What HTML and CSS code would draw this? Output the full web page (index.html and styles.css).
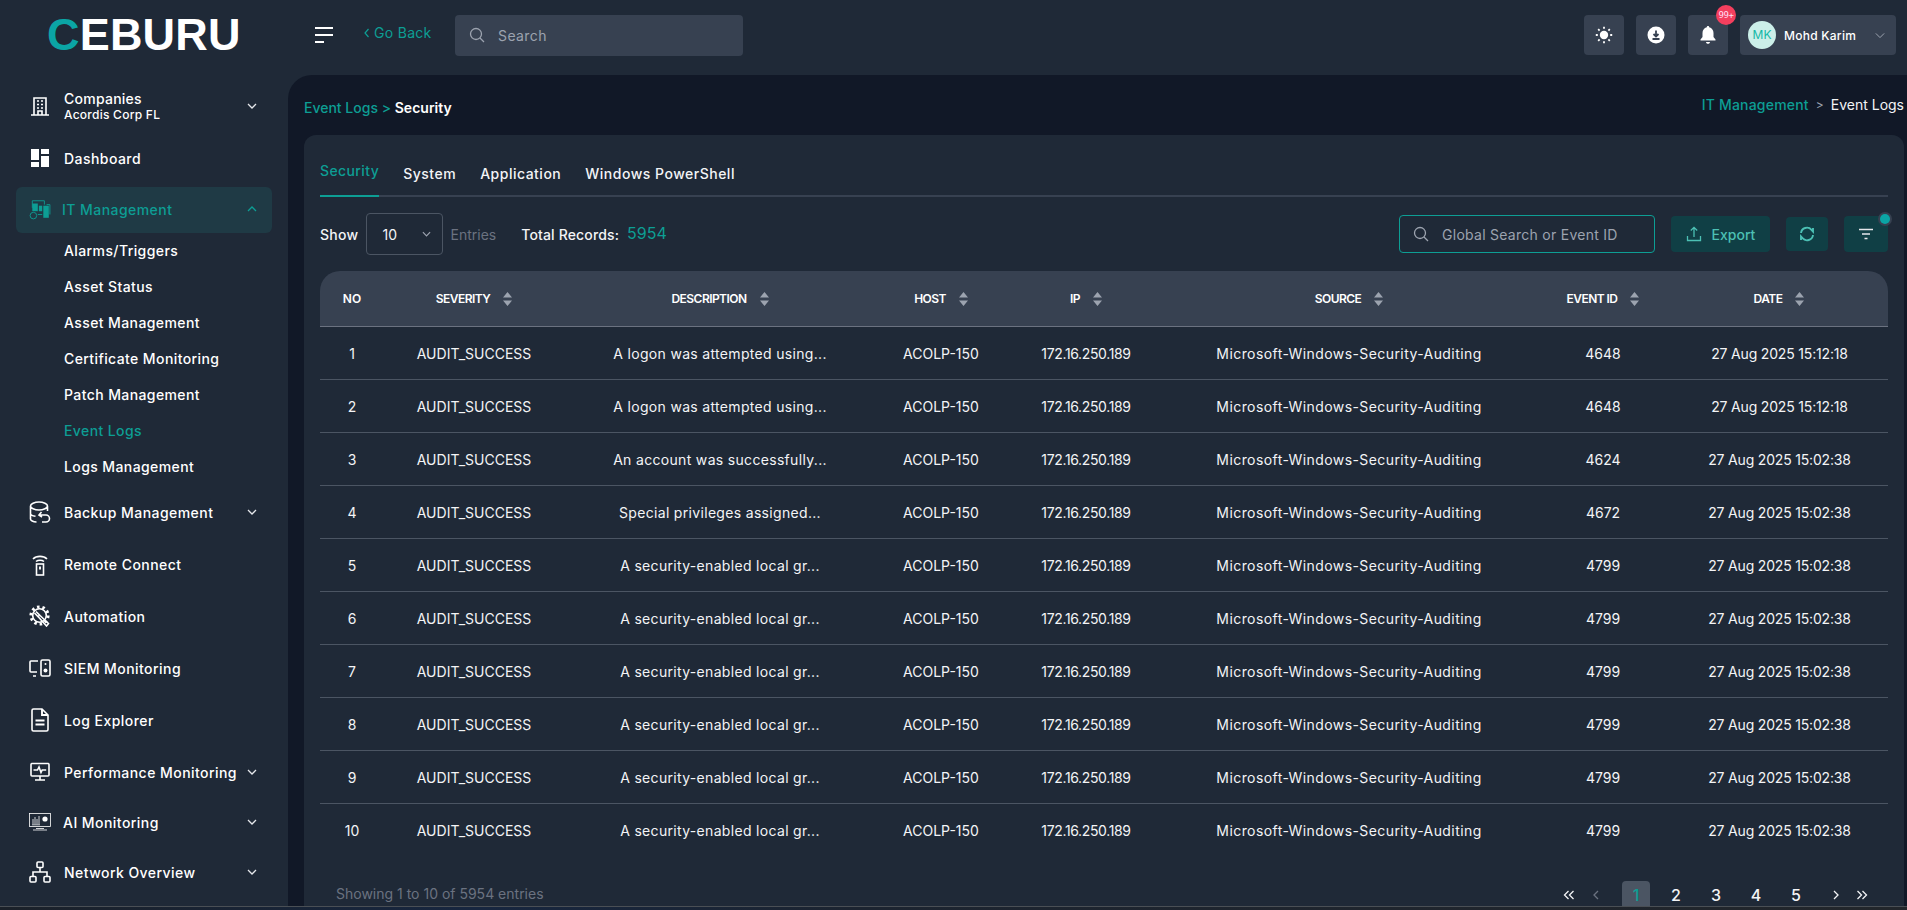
FILE: index.html
```html
<!DOCTYPE html>
<html lang="en">
<head>
<meta charset="utf-8">
<title>Event Logs - Security</title>
<link rel="stylesheet" href="styles.css">
</head>
<body>
<div class="app">
  <header class="topbar">
    <div class="logo"><span class="logo-c">C</span>EBURU</div>
    <button class="burger" aria-label="Menu"><span></span><span></span><span class="short"></span></button>
    <a class="goback"><svg class="goback-ic" viewBox="0 0 6 10"><path d="M4.500 1 1 5l3.500 4"/></svg>Go Back</a>
    <div class="topsearch">
      <svg class="ic16" viewBox="0 0 16 16"><circle cx="7" cy="7" r="5.500"/><path d="m11 11 4 4"/></svg>
      <span>Search</span>
    </div>
    <div class="top-actions">
      <button class="tbtn" aria-label="Theme"><svg viewBox="0 0 18 18" class="ic18 fill"><circle cx="9" cy="9" r="4.200"/><g class="rays"><path d="M9 0.800v2M9 15.200v2M.8 9h2M15.200 9h2M3.200 3.200l1.400 1.400M13.400 13.400l1.400 1.400M3.200 14.800l1.400-1.400M13.400 4.600l1.400-1.400"/></g></svg></button>
      <button class="tbtn" aria-label="Download"><svg viewBox="0 0 18 18" class="ic18"><circle cx="9" cy="9" r="8.500" fill="#fff"/><path d="M9 4.500v5.500M6.500 8 9 10.500 11.500 8M5.500 13h7" fill="none" stroke="#374151" stroke-width="1.800"/></svg></button>
      <button class="tbtn bell-btn" aria-label="Notifications"><svg viewBox="0 0 18 20" class="ic-bell"><path d="M9 1c.7 0 1.200.5 1.200 1.200C13 3 14.500 5.300 14.500 8v4l2 2.500v1h-15v-1l2-2.500V8c0-2.700 1.500-5 4.300-5.800C7.800 1.500 8.300 1 9 1Z" fill="#fff"/><path d="M7 17h4c0 1-.9 1.800-2 1.800S7 18 7 17Z" fill="#fff"/></svg><span class="badge">99+</span></button>
      <div class="userbox">
        <span class="avatar">MK</span>
        <span class="uname">Mohd Karim</span>
        <svg class="chev-user" viewBox="0 0 12 8"><path d="m1 1.500 5 5 5-5"/></svg>
      </div>
    </div>
  </header>

  <div class="body-row">
    <nav class="sidebar">
      <div class="item">
        <svg class="nico" viewBox="0 0 20 20"><path d="M4 19V2h12v17M1 19h18M8 19v-4h4v4"/><path class="dots" d="M7 5h2M11 5h2M7 8.500h2M11 8.500h2M7 12h2M11 12h2"/></svg>
        <div class="label-stack"><span>Companies</span><small>Acordis Corp FL</small></div>
        <svg class="chev" viewBox="0 0 10 6"><path d="m1 1 4 4 4-4"/></svg>
      </div>
      <div class="item">
        <svg class="nico solid" viewBox="0 0 20 20"><rect x="1" y="1" width="8" height="11"/><rect x="1" y="14" width="8" height="5"/><rect x="11" y="1" width="8" height="5"/><rect x="11" y="8" width="8" height="11"/></svg>
        <span>Dashboard</span>
      </div>
      <div class="item active">
        <svg class="nico i-lg" viewBox="0 0 20 20"><path class="thin" d="M3 9V2.500h11V6M16 6h3v9"/><rect class="solidrect" x="3" y="5" width="5" height="7"/><rect class="solidrect" x="9" y="7" width="3" height="5"/><rect class="solidrect" x="13" y="7" width="5" height="11"/><circle class="thin" cx="4" cy="16" r="3"/><path class="thin" d="M8 15h4"/></svg>
        <span>IT Management</span>
        <svg class="chev" viewBox="0 0 10 6"><path d="m1 5 4-4 4 4"/></svg>
      </div>
      <div class="sub">
        <a>Alarms/Triggers</a>
        <a>Asset Status</a>
        <a>Asset Management</a>
        <a>Certificate Monitoring</a>
        <a>Patch Management</a>
        <a class="current">Event Logs</a>
        <a>Logs Management</a>
      </div>
      <div class="item gap-top">
        <svg class="nico i-lg" viewBox="0 0 22 22"><path d="M1.500 5c0-2 4-4 8.500-4s8.500 2 8.500 4-4 4-8.500 4-8.500-2-8.500-4Zm0 0v13c0 1.500 2.500 3 6 3M18.500 5v5M1.500 12.500c0 1.200 2 2.400 5 2.800"/><path d="M12.500 11 10 14l3 2M10.500 14H17a3.500 3.500 0 0 1 0 7h-4"/></svg>
        <span>Backup Management</span>
        <svg class="chev" viewBox="0 0 10 6"><path d="m1 1 4 4 4-4"/></svg>
      </div>
      <div class="item">
        <svg class="nico i-remote" viewBox="0 0 16 23"><path d="M1 6C4.500 2.500 11.500 2.500 15 6M4 8.500c2-1.700 6-1.700 8 0"/><rect x="4.500" y="11" width="7" height="11"/><path d="M8 13.500v3" class="thick"/></svg>
        <span>Remote Connect</span>
      </div>
      <div class="item">
        <svg class="nico i-lg" viewBox="0 0 22 22"><circle class="teeth" cx="10.500" cy="10.500" r="8.600"/><circle cx="10.500" cy="10.500" r="6.800"/><path d="M7 6.500 10.500 10l-1.500 1.500L5.500 8M10.500 10l9 8.500-2 2.500-8.500-9.500"/></svg>
        <span>Automation</span>
      </div>
      <div class="item">
        <svg class="nico i-wide" viewBox="0 0 22 18"><path d="M9 2H2c-.6 0-1 .4-1 1v9c0 .6.4 1 1 1h6M4 17h3"/><rect x="12" y="1" width="9" height="16" rx="1.500"/><circle class="dotfill" cx="16.500" cy="5" r="1"/><circle class="dotfill" cx="16.500" cy="11.500" r="2"/></svg>
        <span>SIEM Monitoring</span>
      </div>
      <div class="item">
        <svg class="nico i-file" viewBox="0 0 18 24"><path d="M2.500 1H11l6 6v14.500c0 .8-.7 1.500-1.500 1.500h-13c-.8 0-1.500-.7-1.500-1.500v-19C1 1.700 1.700 1 2.500 1Z"/><path d="M11 1v6h6M4.500 12.500h9M4.500 16.500h9" class="thick"/></svg>
        <span>Log Explorer</span>
      </div>
      <div class="item">
        <svg class="nico" viewBox="0 0 20 20"><rect x="1" y="1.500" width="18" height="12.500" rx="1"/><path d="M3.500 8h4l1.500-3 2 5.500 1.200-2.500h4M10 14v3.500M5 18h10"/></svg>
        <span>Performance Monitoring</span>
        <svg class="chev" viewBox="0 0 10 6"><path d="m1 1 4 4 4-4"/></svg>
      </div>
      <div class="item ai">
        <svg class="nico wide" viewBox="0 0 22 18"><rect class="thin" x=".5" y=".5" width="21" height="13"/><path class="thin" d="M3 10h8M3 11.800h8M4 9V6M6 9V4M8 9V6M10 9V3M7 15.500h8M4 17h14"/><circle class="dotfill" cx="16" cy="6" r="2.600"/></svg>
        <span>AI Monitoring</span>
        <svg class="chev" viewBox="0 0 10 6"><path d="m1 1 4 4 4-4"/></svg>
      </div>
      <div class="item">
        <svg class="nico i-lg" viewBox="0 0 22 22"><rect x="8" y="1" width="6" height="5.500" rx="1"/><rect x="1" y="15.500" width="6" height="5.500" rx="1"/><rect x="15" y="15.500" width="6" height="5.500" rx="1"/><path d="M11 6.500V11M4 15.500V11h14v4.500"/></svg>
        <span>Network Overview</span>
        <svg class="chev" viewBox="0 0 10 6"><path d="m1 1 4 4 4-4"/></svg>
      </div>
    </nav>

    <main class="main">
      <div class="crumbs">
        <div class="crumb-left"><span class="teal">Event Logs &gt;</span> <b>Security</b></div>
        <div class="crumb-right"><span class="teal">IT Management</span><i>&gt;</i><span>Event Logs</span></div>
      </div>
      <section class="card">
        <div class="tabs">
          <a class="tab on">Security</a>
          <a class="tab">System</a>
          <a class="tab">Application</a>
          <a class="tab">Windows PowerShell</a>
        </div>
        <div class="controls">
          <span class="show">Show</span>
          <div class="select"><span>10</span><svg class="chev sm" viewBox="0 0 10 6"><path d="m1 1 4 4 4-4"/></svg></div>
          <span class="entries">Entries</span>
          <span class="total">Total Records:</span>
          <span class="count">5954</span>
          <div class="tools">
            <div class="gsearch">
              <svg class="ic16" viewBox="0 0 16 16"><circle cx="7" cy="7" r="5.500"/><path d="m11 11 4 4"/></svg>
              <span>Global Search or Event ID</span>
            </div>
            <button class="act export"><svg viewBox="0 0 16 16" class="ic16 tealic"><path d="M8 11V1.500M4.800 4.500 8 1.300l3.200 3.200M1.500 10v4.500h13V10"/></svg>Export</button>
            <button class="act refresh" aria-label="Refresh"><svg viewBox="0 0 16 16" class="ic16 tealic bold"><path d="M2 7a6 6 0 0 1 10.500-3.200L14 5.500V2M14 9a6 6 0 0 1-10.500 3.200L2 10.500V14"/></svg></button>
            <button class="act filter" aria-label="Filter"><svg viewBox="0 0 16 12" class="ic-filter"><path d="M1 1.500h14M4 6h8M6.500 10.500h3"/></svg><span class="dot"></span></button>
          </div>
        </div>

        <table class="grid">
          <colgroup>
            <col class="c-no"><col class="c-sev"><col class="c-desc"><col class="c-host"><col class="c-ip"><col class="c-src"><col class="c-evt"><col class="c-date">
          </colgroup>
          <thead>
            <tr>
              <th>NO</th>
              <th><span class="th">SEVERITY<svg class="sort" viewBox="0 0 9 14"><path d="M4.500 0 9 5.500H0ZM0 8.500h9L4.500 14Z"/></svg></span></th>
              <th><span class="th">DESCRIPTION<svg class="sort" viewBox="0 0 9 14"><path d="M4.500 0 9 5.500H0ZM0 8.500h9L4.500 14Z"/></svg></span></th>
              <th><span class="th">HOST<svg class="sort" viewBox="0 0 9 14"><path d="M4.500 0 9 5.500H0ZM0 8.500h9L4.500 14Z"/></svg></span></th>
              <th><span class="th">IP<svg class="sort" viewBox="0 0 9 14"><path d="M4.500 0 9 5.500H0ZM0 8.500h9L4.500 14Z"/></svg></span></th>
              <th><span class="th">SOURCE<svg class="sort" viewBox="0 0 9 14"><path d="M4.500 0 9 5.500H0ZM0 8.500h9L4.500 14Z"/></svg></span></th>
              <th><span class="th">EVENT ID<svg class="sort" viewBox="0 0 9 14"><path d="M4.500 0 9 5.500H0ZM0 8.500h9L4.500 14Z"/></svg></span></th>
              <th><span class="th">DATE<svg class="sort" viewBox="0 0 9 14"><path d="M4.500 0 9 5.500H0ZM0 8.500h9L4.500 14Z"/></svg></span></th>
            </tr>
          </thead>
          <tbody>
            <tr><td>1</td><td>AUDIT_SUCCESS</td><td>A logon was attempted using...</td><td>ACOLP-150</td><td>172.16.250.189</td><td>Microsoft-Windows-Security-Auditing</td><td>4648</td><td>27 Aug 2025 15:12:18</td></tr>
            <tr><td>2</td><td>AUDIT_SUCCESS</td><td>A logon was attempted using...</td><td>ACOLP-150</td><td>172.16.250.189</td><td>Microsoft-Windows-Security-Auditing</td><td>4648</td><td>27 Aug 2025 15:12:18</td></tr>
            <tr><td>3</td><td>AUDIT_SUCCESS</td><td>An account was successfully...</td><td>ACOLP-150</td><td>172.16.250.189</td><td>Microsoft-Windows-Security-Auditing</td><td>4624</td><td>27 Aug 2025 15:02:38</td></tr>
            <tr><td>4</td><td>AUDIT_SUCCESS</td><td>Special privileges assigned...</td><td>ACOLP-150</td><td>172.16.250.189</td><td>Microsoft-Windows-Security-Auditing</td><td>4672</td><td>27 Aug 2025 15:02:38</td></tr>
            <tr><td>5</td><td>AUDIT_SUCCESS</td><td>A security-enabled local gr...</td><td>ACOLP-150</td><td>172.16.250.189</td><td>Microsoft-Windows-Security-Auditing</td><td>4799</td><td>27 Aug 2025 15:02:38</td></tr>
            <tr><td>6</td><td>AUDIT_SUCCESS</td><td>A security-enabled local gr...</td><td>ACOLP-150</td><td>172.16.250.189</td><td>Microsoft-Windows-Security-Auditing</td><td>4799</td><td>27 Aug 2025 15:02:38</td></tr>
            <tr><td>7</td><td>AUDIT_SUCCESS</td><td>A security-enabled local gr...</td><td>ACOLP-150</td><td>172.16.250.189</td><td>Microsoft-Windows-Security-Auditing</td><td>4799</td><td>27 Aug 2025 15:02:38</td></tr>
            <tr><td>8</td><td>AUDIT_SUCCESS</td><td>A security-enabled local gr...</td><td>ACOLP-150</td><td>172.16.250.189</td><td>Microsoft-Windows-Security-Auditing</td><td>4799</td><td>27 Aug 2025 15:02:38</td></tr>
            <tr><td>9</td><td>AUDIT_SUCCESS</td><td>A security-enabled local gr...</td><td>ACOLP-150</td><td>172.16.250.189</td><td>Microsoft-Windows-Security-Auditing</td><td>4799</td><td>27 Aug 2025 15:02:38</td></tr>
            <tr><td>10</td><td>AUDIT_SUCCESS</td><td>A security-enabled local gr...</td><td>ACOLP-150</td><td>172.16.250.189</td><td>Microsoft-Windows-Security-Auditing</td><td>4799</td><td>27 Aug 2025 15:02:38</td></tr>
          </tbody>
        </table>

        <div class="foot">
          <span class="showing">Showing 1 to 10 of 5954 entries</span>
          <div class="pager">
            <a class="pg edge first" aria-label="First"><svg class="pgi" viewBox="0 0 12 10"><path d="M5.500 1 1.500 5l4 4M10.500 1l-4 4 4 4"/></svg></a>
            <a class="pg muted" aria-label="Previous"><svg class="pgi one" viewBox="0 0 6 10"><path d="M5 1 1 5l4 4"/></svg></a>
            <a class="pg cur">1</a>
            <a class="pg">2</a>
            <a class="pg">3</a>
            <a class="pg">4</a>
            <a class="pg">5</a>
            <a class="pg" aria-label="Next"><svg class="pgi one" viewBox="0 0 6 10"><path d="m1 1 4 4-4 4"/></svg></a>
            <a class="pg edge last" aria-label="Last"><svg class="pgi" viewBox="0 0 12 10"><path d="m1.500 1 4 4-4 4M6.500 1l4 4-4 4"/></svg></a>
          </div>
        </div>
      </section>
    </main>
  </div>
  <div class="taskstrip"></div>
</div>
</body>
</html>
```

FILE: styles.css
```css
* { box-sizing: border-box; }
html, body { margin: 0; height: 100%; overflow: hidden; }
body {
  background: #1f2937;
  color: #f3f4f6;
  font-family: Inter, "Noto Sans", sans-serif;
  font-size: 14px;
}
svg { display: block; flex: none; }
button { border: 0; padding: 0; font: inherit; color: inherit; }

.app { height: 910px; display: flex; flex-direction: column; overflow: hidden; }
.taskstrip {
  height: 4px; flex: none;
  background: linear-gradient(90deg, #1b2129 0, #17263f 25%, #1c2430 45%, #22262b 100%);
  border-top: 1px solid #4a4f55;
}

/* top bar */
.topbar { height: 75px; flex: none; display: flex; align-items: center; padding-right: 11px; }
.logo {
  width: 315px; padding-left: 47px; flex: none;
  font-family: "Liberation Sans", sans-serif; font-weight: 700; font-size: 45px; line-height: 44px;
  color: #fff; letter-spacing: .2px; margin-top: -6px;
}
.logo-c { color: #0ba5a5; }
.burger { width: 18px; height: 16px; background: none; display: flex; flex-direction: column; justify-content: space-between; margin-top: -6px; }
.burger span { display: block; height: 2px; width: 18px; background: #fff; }
.burger .short { width: 9px; }
.goback { display: flex; align-items: center; gap: 4px; color: #0d9e94; margin-left: 31px; width: 91px; margin-top: -10px; font-size: 14px; letter-spacing: .3px; }
.goback-ic { width: 6px; height: 10px; }
.goback-ic path { fill: none; stroke: #0d9e94; stroke-width: 1.200; }
.topsearch {
  width: 288px; height: 41px; background: #374151; border-radius: 4px;
  display: flex; align-items: center; gap: 13px; padding-left: 14px; color: #9ca3af; margin-top: -5px; letter-spacing: .4px;
}
.ic16 { width: 16px; height: 16px; }
.ic16 circle, .ic16 path { fill: none; stroke: #9ca3af; stroke-width: 1.300; }
.top-actions { margin-left: auto; display: flex; gap: 12px; margin-top: -5px; }
.tbtn { width: 40px; height: 40px; background: #374151; border-radius: 4px; display: flex; align-items: center; justify-content: center; position: relative; }
.ic18 { width: 18px; height: 18px; }
.ic18.fill circle { fill: #fff; }
.rays path { stroke: #fff; stroke-width: 1.800; fill: none; }
.ic-bell { width: 18px; height: 20px; }
.badge {
  position: absolute; top: -10px; right: -8px; width: 20px; height: 20px; border-radius: 50%;
  background: #f43f5e; color: #fde; font-size: 9px; line-height: 20px; text-align: center; font-family: "DejaVu Sans Mono", monospace; letter-spacing: -.5px;
}
.userbox { width: 156px; height: 40px; background: #374151; border-radius: 4px; display: flex; align-items: center; padding: 0 11px 0 8px; }
.avatar { width: 28px; height: 28px; border-radius: 50%; background: #ccefe9; color: #14b8a6; font-size: 12px; line-height: 28px; text-align: center; flex: none; }
.uname { margin-left: 8px; font-size: 12px; font-weight: 500; color: #fff; white-space: nowrap; letter-spacing: .25px; }
.chev-user { width: 10px; height: 7px; margin-left: auto; }
.chev-user path { fill: none; stroke: #9ca3af; stroke-width: 1.200; }

/* body */
.body-row { flex: 1; display: flex; min-height: 0; }
.sidebar { width: 288px; flex: none; padding: 6px 16px 0; }
.item { height: 52px; display: flex; align-items: center; padding: 0 15px 2px 14px; color: #fff; font-weight: 500; position: relative; white-space: nowrap; letter-spacing: .45px; }
.item > span { margin-left: 14px; }
.nico { width: 20px; height: 20px; }
.nico path, .nico rect, .nico circle { fill: none; stroke: #fff; stroke-width: 1.600; }
.nico.solid rect { fill: #fff; stroke: none; }
.nico .thick { stroke-width: 1.900; }
.nico .thin { stroke-width: .8; }
.nico .dotfill { fill: #fff; stroke: none; }
.nico .teeth { stroke-width: 3; stroke-dasharray: 2.500 2.900; }
.nico.wide { width: 22px; height: 18px; margin-left: -1px; }
.nico.i-lg { width: 22px; height: 22px; margin: 0 -1px; }
.nico.i-remote { width: 16px; height: 23px; margin: 0 2px; }
.nico.i-file { width: 18px; height: 24px; margin: 0 1px; }
.nico.i-wide { width: 22px; height: 18px; margin: 0 -1px; }
.label-stack { margin-left: 14px; display: flex; flex-direction: column; gap: 0; letter-spacing: .25px; margin-top: -1px; }
.label-stack small { font-size: 12px; font-weight: 500; }
.chev { width: 10px; height: 6px; margin-left: auto; }
.chev path { fill: none; stroke: #e5e7eb; stroke-width: 1.300; }
.item.active { height: 46px; margin-top: 2px; background: #1f3a45; border-radius: 6px; color: #0d9e94; }
.item.active > span { margin-left: 12px; }
.item.active .nico path, .item.active .nico circle { stroke: #0d9e94; }
.item.active .nico .solidrect { fill: #0d9e94; stroke: none; }
.item.active .chev path { stroke: #0d9e94; }
.sub { display: flex; flex-direction: column; padding-left: 48px; }
.sub a { height: 36px; line-height: 36px; color: #fff; font-weight: 500; letter-spacing: .4px; }
.sub a.current { color: #0d9e94; }
.gap-top { margin-top: 2px; }
.item.ai { height: 48px; }
.item.ai > span { margin-left: 12px; }

/* main */
.main { flex: 1; min-width: 0; background: #111827; border-radius: 24px 0 0 0; padding: 0 3px 0 16px; display: flex; flex-direction: column; }
.crumbs { height: 60px; flex: none; display: flex; justify-content: space-between; align-items: center; padding-top: 4px; }
.teal { color: #0d9e94; font-weight: 500; }
.crumb-left { font-weight: 500; }
.crumb-left b { font-weight: 600; color: #fff; }
.crumb-right { display: flex; gap: 7px; margin-top: -5px; }
.crumb-right .teal { letter-spacing: .2px; }
.crumb-right i { font-style: normal; color: #9ca3af; font-size: 12px; line-height: 17px; }
.card { flex: 1; min-height: 0; overflow: hidden; background: #1f2937; border-radius: 12px 12px 0 0; padding: 0 16px; }
.tabs { height: 62px; display: flex; align-items: flex-end; gap: 24px; border-bottom: 2px solid #374151; }
.tab { height: 47px; line-height: 47px; color: #f3f4f6; font-weight: 500; margin-bottom: -2px; letter-spacing: .5px; }
.tab.on { color: #0d9e94; border-bottom: 2px solid #0d9e94; height: 49px; line-height: 46px; letter-spacing: .4px; }

.controls { height: 42px; margin-top: 16px; display: flex; align-items: center; }
.select { width: 77px; height: 42px; margin-left: 7px; border: 1px solid #4b5563; border-radius: 4px; display: flex; align-items: center; padding: 0 11px 0 16px; }
.chev.sm { width: 9px; }
.chev.sm path { stroke: #9ca3af; }
.show { font-weight: 500; letter-spacing: .3px; }
.entries { margin-left: 8px; color: #6b7280; }
.total { margin-left: 25px; font-weight: 500; letter-spacing: .15px; }
.count { margin-left: 8px; font-size: 16px; color: #0d9e94; margin-top: -2px; }
.tools { margin-left: auto; display: flex; align-items: center; }
.gsearch { width: 256px; height: 38px; border: 1px solid #0d9e94; border-radius: 4px; display: flex; align-items: center; gap: 13px; padding-left: 13px; color: #9ca3af; letter-spacing: .27px; }
.act { background: #103f45; border-radius: 4px; display: flex; align-items: center; justify-content: center; height: 36px; color: #4cc0b4; position: relative; }
.tealic path { stroke: #4cc0b4; }
.tealic.bold path { stroke-width: 1.900; }
.export { width: 99px; gap: 10px; margin-left: 16px; font-weight: 500; }
.refresh { width: 42px; height: 34px; margin-left: 16px; }
.filter { width: 44px; margin-left: 16px; }
.ic-filter { width: 16px; height: 12px; }
.ic-filter path { fill: none; stroke: #e5e7eb; stroke-width: 1.600; }
.dot { position: absolute; top: -2px; right: -2px; width: 10px; height: 10px; border-radius: 50%; background: #0ba5a5; box-shadow: 0 0 0 2px #374151; }

/* table */
.grid { width: 1568px; margin-top: 16px; border-collapse: separate; border-spacing: 0; table-layout: fixed; }
.c-no { width: 64px; } .c-sev { width: 180px; } .c-desc { width: 312px; } .c-host { width: 130px; }
.c-ip { width: 160px; } .c-src { width: 366px; } .c-evt { width: 142px; } .c-date { width: 214px; }
.grid th { height: 56px; background: #374151; color: #fff; font-size: 12px; font-weight: 600; border-bottom: 1px solid #6b7280; padding: 0; text-align: center; }
.grid th:first-child { border-top-left-radius: 20px; }
.grid th:last-child { border-top-right-radius: 20px; }
.grid th:last-child, .grid td:last-child { padding-right: 4px; }
.th { display: inline-flex; align-items: center; gap: 13px; letter-spacing: -.55px; }
.sort { width: 9px; height: 14px; }
.sort path { fill: #9ca3af; }
.grid td { height: 53px; text-align: center; color: #f3f4f6; border-bottom: 1px solid #4b5563; white-space: nowrap; }
.grid td:nth-child(3) { letter-spacing: .32px; }
.grid td:nth-child(5) { letter-spacing: -.35px; }
.grid td:nth-child(6) { letter-spacing: .42px; }
.grid td:nth-child(8) { letter-spacing: -.18px; }
.grid tbody tr:last-child td { border-bottom: 0; }

.foot { display: flex; justify-content: space-between; align-items: flex-start; padding: 24px 18px 0 16px; }
.showing { color: #6b7280; line-height: 26px; }
.pager { display: flex; gap: 12px; }
.pg { width: 28px; height: 28px; line-height: 28px; display: flex; align-items: center; justify-content: center; color: #f3f4f6; font-weight: 500; font-size: 16px; border-radius: 4px; }
.pg.cur { background: #4b5563; color: #0d9e94; }
.pg.edge { width: 16px; }
.pg.first { margin-right: -7px; }
.pg.last { margin-left: -8px; }
.pgi { width: 12px; height: 10px; }
.pgi.one { width: 6px; }
.pgi path { fill: none; stroke: #f3f4f6; stroke-width: 1.300; }
.pg.muted .pgi path { stroke: #6b7280; }
```
